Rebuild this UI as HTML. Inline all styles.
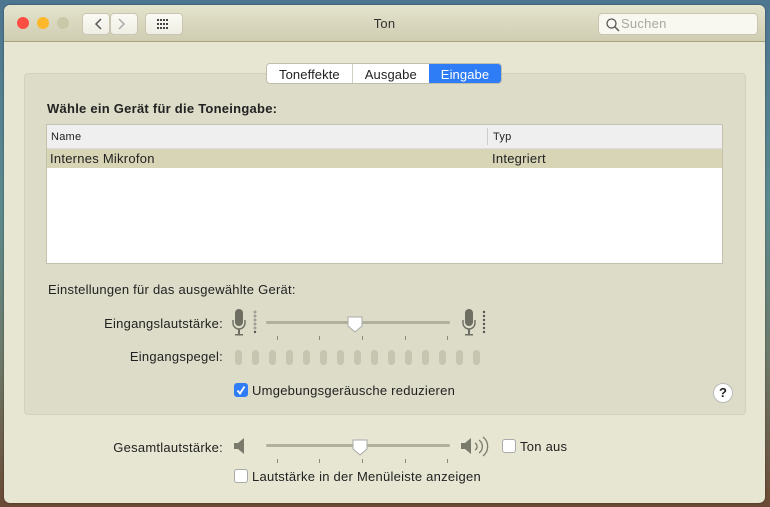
<!DOCTYPE html>
<html><head><meta charset="utf-8"><style>
*{box-sizing:border-box;margin:0;padding:0}
body{width:770px;height:507px;overflow:hidden;font-family:"Liberation Sans",sans-serif;font-size:13px;color:#222;letter-spacing:.25px;
background:linear-gradient(180deg,#4d7690 0%,#5b8a8f 40%,#6d7a6a 70%,#6b4a35 100%);position:relative}
.win{position:absolute;left:4px;top:5px;width:761px;height:498px;background:#e6e6d2;border-radius:6px;overflow:hidden;box-shadow:0 0 2px rgba(0,0,0,.4)}
.tb{position:absolute;left:0;top:0;width:100%;height:37px;background:linear-gradient(#e4e3cc,#cfcdb2);border-bottom:1px solid #a8a47a}
.dot{position:absolute;top:12px;width:12px;height:12px;border-radius:50%}
.btn{position:absolute;top:8px;height:22px;background:linear-gradient(#fbfbf5,#eeeee4);border:1px solid #c8c6b0;border-radius:4px}
.abs{position:absolute}
.panel{position:absolute;left:20px;top:68px;width:722px;height:342px;background:#dcdcc8;border:1px solid #d2d2bc;border-radius:4px}
.tabs{position:absolute;left:262px;top:58px;height:21px;display:flex;border:1px solid #c0bea8;border-radius:4px;background:#fff;overflow:hidden;font-size:13px;letter-spacing:.1px}
.tabs div{padding:2px 12px 0;line-height:17px}
.cb{position:absolute;width:14px;height:14px;border:1px solid #aaa;border-radius:3px;background:#fff}
.tick{position:absolute;width:1px;height:4px;background:#8a8a7a}
.led{position:absolute;top:345px;width:7px;height:15px;border-radius:4px;background:#c6c6b0}
</style></head><body>
<div class="win">
<div class="tb">
 <div class="dot" style="left:13px;background:#fe4e44"></div>
 <div class="dot" style="left:33px;background:#fdb72a"></div>
 <div class="dot" style="left:53px;background:#cbc8aa"></div>
 <div class="btn" style="left:78px;width:28px"></div>
 <div class="btn" style="left:106px;width:28px"></div>
 <svg class="abs" style="left:78px;top:8px" width="56" height="22"><path d="M19 6l-5 5 5 5" stroke="#555" stroke-width="1.5" fill="none"/><path d="M37 6l5 5-5 5" stroke="#aaa" stroke-width="1.5" fill="none"/></svg>
 <div class="btn" style="left:141px;width:38px"></div>
 <svg class="abs" style="left:153px;top:14px" width="14" height="10"><g fill="#444"><rect x="0" y="0" width="2" height="2"/><rect x="3" y="0" width="2" height="2"/><rect x="6" y="0" width="2" height="2"/><rect x="9" y="0" width="2" height="2"/><rect x="0" y="4" width="2" height="2"/><rect x="3" y="4" width="2" height="2"/><rect x="6" y="4" width="2" height="2"/><rect x="9" y="4" width="2" height="2"/><rect x="0" y="8" width="2" height="2"/><rect x="3" y="8" width="2" height="2"/><rect x="6" y="8" width="2" height="2"/><rect x="9" y="8" width="2" height="2"/></g></svg>
 <div class="abs" style="left:0;width:761px;top:11px;text-align:center;font-size:13px;color:#333">Ton</div>
 <div class="btn" style="left:594px;width:160px;height:22px;background:#f8f8f0"></div>
 <svg class="abs" style="left:602px;top:13px" width="14" height="14"><circle cx="5.5" cy="5.5" r="4.5" stroke="#555" stroke-width="1.3" fill="none"/><path d="M9 9l4 4" stroke="#555" stroke-width="1.5"/></svg>
 <div class="abs" style="left:617px;top:11px;color:#a8a8a0">Suchen</div>
</div>
<div class="panel"></div>
<div class="tabs"><div style="border-right:1px solid #d0d0c0">Toneffekte</div><div>Ausgabe</div><div style="background:#2e7cf6;color:#fff">Eingabe</div></div>
<div class="abs" style="left:43px;top:96px;font-weight:bold">Wähle ein Gerät für die Toneingabe:</div>
<div class="abs" style="left:42px;top:119px;width:677px;height:140px;background:#fff;border:1px solid #c4c2ac">
 <div style="height:24px;background:#efefef;border-bottom:1px solid #ddd;font-size:11px;position:relative"><span class="abs" style="left:4px;top:6px">Name</span><span class="abs" style="left:440px;top:3px;width:1px;height:17px;background:#ccc"></span><span class="abs" style="left:446px;top:6px">Typ</span></div>
 <div style="height:19px;background:#d8d4b6;position:relative"><span class="abs" style="left:3px;top:2px">Internes Mikrofon</span><span class="abs" style="left:445px;top:2px">Integriert</span></div>
</div>
<div class="abs" style="left:44px;top:277px">Einstellungen für das ausgewählte Gerät:</div>
<div class="abs" style="left:0;width:219px;text-align:right;top:311px">Eingangslautstärke:</div>
<div class="abs" style="left:0;width:219px;text-align:right;top:344px">Eingangspegel:</div>
<svg class="abs" style="left:226px;top:302px" width="260" height="34">
 <g fill="#6e6e62"><rect x="5" y="2" width="8" height="17" rx="4"/><path d="M3 13v3a6 6 0 0 0 12 0v-3" stroke="#6e6e62" stroke-width="1.4" fill="none"/><rect x="8" y="22" width="2" height="5"/><rect x="5" y="27" width="8" height="1.5"/>
 <rect x="235" y="2" width="8" height="17" rx="4"/><path d="M233 13v3a6 6 0 0 0 12 0v-3" stroke="#6e6e62" stroke-width="1.4" fill="none"/><rect x="238" y="22" width="2" height="5"/><rect x="235" y="27" width="8" height="1.5"/></g>
 <g fill="none" stroke="#888" stroke-width=".8"><circle cx="25" cy="5" r="1"/><circle cx="25" cy="9" r="1"/><circle cx="25" cy="13" r="1"/><circle cx="25" cy="17" r="1"/><circle cx="25" cy="21" r="1"/></g><circle cx="25" cy="25" r="1.2" fill="#555"/>
 <g fill="#555"><circle cx="254" cy="5" r="1.2"/><circle cx="254" cy="9" r="1.2"/><circle cx="254" cy="13" r="1.2"/><circle cx="254" cy="17" r="1.2"/><circle cx="254" cy="21" r="1.2"/><circle cx="254" cy="25" r="1.2"/></g>
</svg>
<div class="abs" style="left:262px;top:316px;width:184px;height:3px;border-radius:2px;background:#b0b09c"></div>
<div class="tick" style="left:273px;top:331px"></div><div class="tick" style="left:315px;top:331px"></div><div class="tick" style="left:358px;top:331px"></div><div class="tick" style="left:401px;top:331px"></div><div class="tick" style="left:443px;top:331px"></div>
<svg class="abs" style="left:342px;top:310px" width="20" height="20"><path d="M2 2h14v9l-7 6-7-6z" fill="#fff" stroke="#aaa" stroke-width="1"/></svg>
<div class="led" style="left:231px"></div><div class="led" style="left:248px"></div><div class="led" style="left:265px"></div><div class="led" style="left:282px"></div><div class="led" style="left:299px"></div><div class="led" style="left:316px"></div><div class="led" style="left:333px"></div><div class="led" style="left:350px"></div><div class="led" style="left:367px"></div><div class="led" style="left:384px"></div><div class="led" style="left:401px"></div><div class="led" style="left:418px"></div><div class="led" style="left:435px"></div><div class="led" style="left:452px"></div><div class="led" style="left:469px"></div>
<div class="cb" style="left:230px;top:378px;background:#2e7cf6;border-color:#2e7cf6"><svg width="12" height="12" style="position:absolute;left:0;top:0"><path d="M2.5 6.5l2.5 3 4.5-7" stroke="#fff" stroke-width="1.8" fill="none"/></svg></div>
<div class="abs" style="left:248px;top:378px">Umgebungsgeräusche reduzieren</div>
<div class="abs" style="left:709px;top:378px;width:20px;height:20px;border-radius:50%;background:#fff;border:1px solid #bbb;text-align:center;font-weight:bold;font-size:13px;line-height:18px;letter-spacing:0">?</div>
<div class="abs" style="left:0;width:219px;text-align:right;top:435px">Gesamtlautstärke:</div>
<svg class="abs" style="left:228px;top:430px" width="270" height="24">
 <path d="M2 8h4l6-5v16l-6-5H2z" fill="#7a7a6c"/>
 <path d="M229 8h4l6-5v16l-6-5h-4z" fill="#7a7a6c"/>
 <g fill="none" stroke="#7a7a6c" stroke-width="1.3"><path d="M243 8a4 4 0 0 1 0 7"/><path d="M247 5a8 8 0 0 1 0 13"/><path d="M251 2a12 12 0 0 1 0 19"/></g>
</svg>
<div class="abs" style="left:262px;top:439px;width:184px;height:3px;border-radius:2px;background:#b0b09c"></div>
<div class="tick" style="left:273px;top:454px"></div><div class="tick" style="left:315px;top:454px"></div><div class="tick" style="left:358px;top:454px"></div><div class="tick" style="left:401px;top:454px"></div><div class="tick" style="left:443px;top:454px"></div>
<svg class="abs" style="left:347px;top:433px" width="20" height="20"><path d="M2 2h14v9l-7 6-7-6z" fill="#fff" stroke="#aaa" stroke-width="1"/></svg>
<div class="cb" style="left:498px;top:434px"></div>
<div class="abs" style="left:516px;top:434px">Ton aus</div>
<div class="cb" style="left:230px;top:464px"></div>
<div class="abs" style="left:248px;top:464px">Lautstärke in der Menüleiste anzeigen</div>
</div>
</body></html>
